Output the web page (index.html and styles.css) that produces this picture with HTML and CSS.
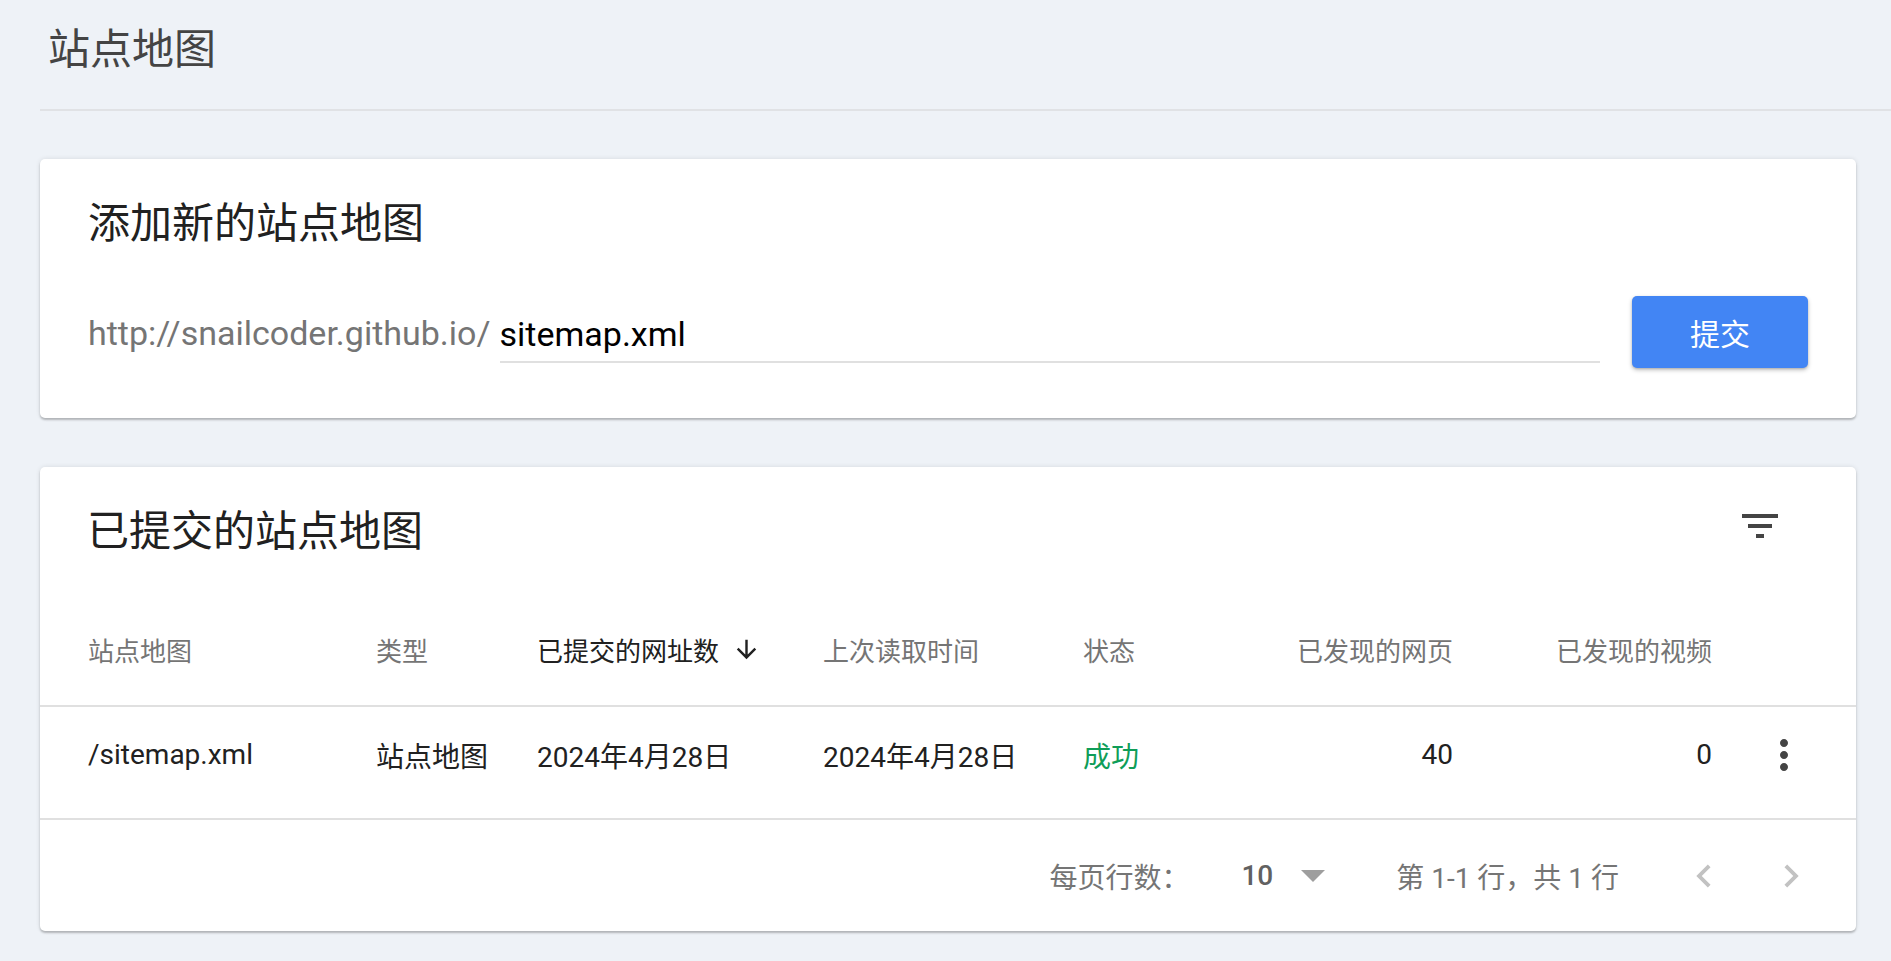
FILE: index.html
```html
<!DOCTYPE html>
<html lang="zh-CN">
<head>
<meta charset="utf-8">
<title>站点地图</title>
<link rel="stylesheet" href="styles.css">
</head>
<body>
<div class="page">
  <header class="page-header">
    <h1 class="page-title">站点地图</h1>
  </header>
  <main class="content">
    <section class="card add-card">
      <h2 class="card-title">添加新的站点地图</h2>
      <div class="add-row">
        <span class="url-prefix">http://snailcoder.github.io/</span>
        <input class="url-input" type="text" value="sitemap.xml">
        <button class="submit-btn" type="button">提交</button>
      </div>
    </section>

    <section class="card list-card">
      <div class="list-head">
        <h2 class="card-title list-title">已提交的站点地图</h2>
        <span class="icon-btn">
          <svg viewBox="0 0 24 24" width="48" height="48"><path fill="#444" d="M10 18h4v-2h-4v2zM3 6v2h18V6H3zm3 7h12v-2H6v2z"/></svg>
        </span>
      </div>

      <div class="row head-row">
        <div class="cell">站点地图</div>
        <div class="cell">类型</div>
        <div class="cell sorted">已提交的网址数
          <svg class="sort-arrow" viewBox="0 0 24 24" width="29" height="29"><path fill="#212121" d="M20 12l-1.41-1.41L13 16.17V4h-2v12.17l-5.58-5.59L4 12l8 8 8-8z"/></svg>
        </div>
        <div class="cell">上次读取时间</div>
        <div class="cell">状态</div>
        <div class="cell num">已发现的网页</div>
        <div class="cell num">已发现的视频</div>
        <div class="cell"></div>
      </div>

      <div class="row body-row">
        <div class="cell">/sitemap.xml</div>
        <div class="cell">站点地图</div>
        <div class="cell">2024年4月28日</div>
        <div class="cell">2024年4月28日</div>
        <div class="cell status-ok">成功</div>
        <div class="cell num">40</div>
        <div class="cell num">0</div>
        <div class="cell menu">
          <svg viewBox="0 0 24 24" width="48" height="48"><path fill="#444" d="M12 8c1.1 0 2-.9 2-2s-.9-2-2-2-2 .9-2 2 .9 2 2 2zm0 2c-1.1 0-2 .9-2 2s.9 2 2 2 2-.9 2-2-.9-2-2-2zm0 6c-1.1 0-2 .9-2 2s.9 2 2 2 2-.9 2-2-.9-2-2-2z"/></svg>
        </div>
      </div>

      <div class="table-footer">
        <span class="rows-label">每页行数：</span>
        <span class="rows-value">10</span>
        <svg class="drop" viewBox="0 0 10 5" width="24" height="12"><path fill="#9e9e9e" d="M0 0l5 5 5-5z"/></svg>
        <span class="range">第 1-1 行，共 1 行</span>
        <span class="pager">
          <svg viewBox="0 0 24 24" width="46" height="46"><path fill="#c2c2c2" d="M15.41 7.41L14 6l-6 6 6 6 1.41-1.41L10.83 12z"/></svg>
        </span>
        <span class="pager next">
          <svg viewBox="0 0 24 24" width="46" height="46"><path fill="#c2c2c2" d="M10 6L8.59 7.41 13.17 12l-4.58 4.59L10 18l6-6z"/></svg>
        </span>
      </div>
    </section>
  </main>
</div>
</body>
</html>
```

FILE: styles.css
```css
* { box-sizing: border-box; }

html, body {
  margin: 0;
  padding: 0;
}

body {
  background: #eef2f7;
  font-family: "Roboto", "Noto Sans CJK SC", sans-serif;
  color: #212121;
}

.page {
  padding-left: 40px;
}

.page-header {
  padding: 24px 0 33px 8px;
  border-bottom: 2px solid #e0e2e5;
}

.page-title {
  margin: 0;
  font-size: 42px;
  line-height: 52px;
  font-weight: 400;
  color: #444;
}

.content {
  padding: 48px 35px 0 0;
}

.card {
  background: #fff;
  border-radius: 5px;
  box-shadow: 0 2px 2px rgba(0,0,0,0.22), 0 0 5px rgba(0,0,0,0.10);
  margin-bottom: 49px;
}

.card-title {
  margin: 0;
  font-size: 42px;
  line-height: 52px;
  font-weight: 400;
  color: #212121;
}

/* add card */
.add-card {
  padding: 39px 48px 50px 48px;
}

.add-row {
  margin-top: 46px;
  height: 72px;
  display: flex;
  align-items: flex-end;
}

.url-prefix {
  font-size: 34px;
  line-height: 40px;
  color: #757575;
  margin-bottom: 15px;
  white-space: nowrap;
}

.url-input {
  flex: 1;
  min-width: 0;
  font-family: "Roboto", "Noto Sans CJK SC", sans-serif;
  font-size: 34px;
  line-height: 40px;
  height: 49px;
  color: #000;
  border: none;
  border-bottom: 2px solid #e0e0e0;
  padding: 0 0 7px 0;
  margin: 0 32px 5px 9px;
  outline: none;
  background: transparent;
}

.submit-btn {
  width: 176px;
  height: 72px;
  background: #4285f4;
  color: #fff;
  border: none;
  border-radius: 5px;
  font-family: "Roboto", "Noto Sans CJK SC", sans-serif;
  font-size: 30px;
  box-shadow: 0 2px 4px rgba(0,0,0,0.25), 0 1px 2px rgba(0,0,0,0.12);
  padding: 0;
}

/* list card */
.list-head {
  height: 127px;
  padding: 35px 72px 0 47px;
  display: flex;
  justify-content: space-between;
  align-items: flex-start;
}

.list-title {
  margin-top: 4px;
}

.icon-btn {
  display: flex;
  width: 48px;
  height: 48px;
}

.row {
  display: grid;
  grid-template-columns: 288px 161px 286px 260px 197px 173px 259px 96px;
  height: 113px;
  padding: 0 48px 0 48px;
  border-bottom: 2px solid #e0e0e0;
  align-items: center;
}

.head-row {
  font-size: 26px;
  color: #757575;
}

.head-row .sorted {
  color: #212121;
  display: flex;
  align-items: center;
}

.sort-arrow {
  margin-left: 13px;
}

.body-row {
  font-size: 28px;
  color: #212121;
  padding-bottom: 16px;
}

.num {
  text-align: right;
}

.status-ok {
  color: #0f9d58;
}

.menu {
  display: flex;
  justify-content: flex-end;
}

.table-footer {
  height: 111px;
  display: flex;
  justify-content: flex-end;
  align-items: center;
  padding-right: 42px;
  font-size: 28px;
  color: #757575;
}

.rows-value {
  margin-left: 52px;
  color: #616161;
  font-weight: 500;
}

.drop {
  margin-left: 28px;
}

.range {
  margin-left: 71px;
}

.pager {
  display: flex;
  margin-left: 62px;
}

.pager.next {
  margin-left: 41px;
}
```
